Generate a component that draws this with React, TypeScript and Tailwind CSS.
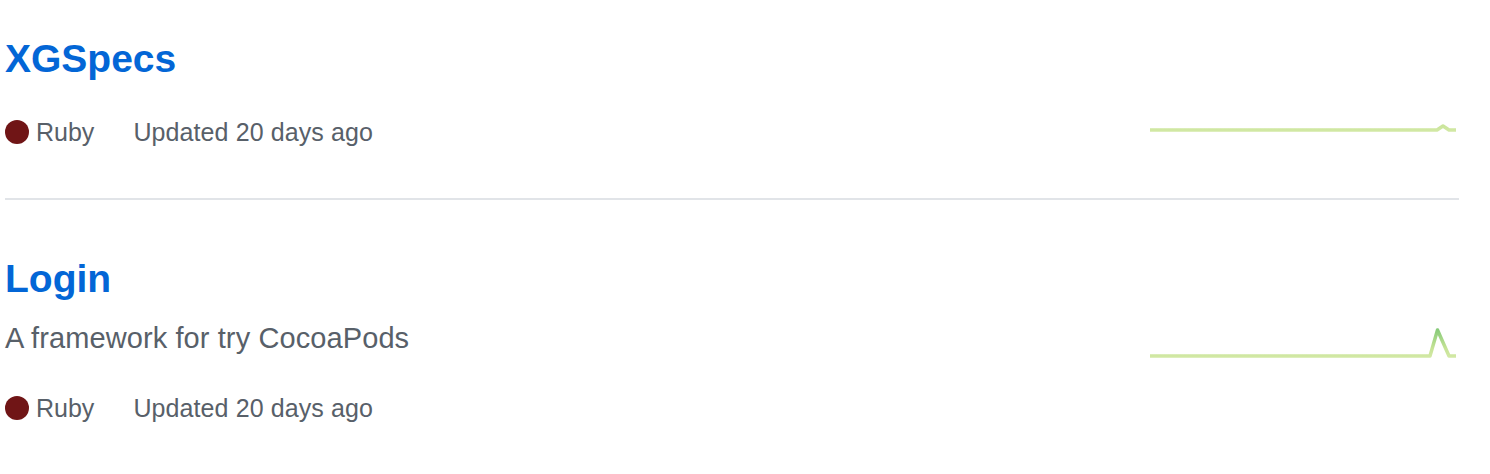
const font = { fontFamily: '"Liberation Sans", Arial, sans-serif' };

interface Repo {
  name: string;
  description?: string;
  language: string;
  updated: string;
  points: string;
}

const REPOS: Repo[] = [
  {
    name: "XGSpecs",
    language: "Ruby",
    updated: "Updated 20 days ago",
    points: "1,58 288,58 294,54 300,58 307,58",
  },
  {
    name: "Login",
    description: "A framework for try CocoaPods",
    language: "Ruby",
    updated: "Updated 20 days ago",
    points: "1,58 281,58 288.5,32 300,58 307,58",
  },
];

function Sparkline({ points, id }: { points: string; id: string }) {
  return (
    <svg width="310" height="60" viewBox="0 0 310 60" className="block">
      <defs>
        <linearGradient id={id} x1="0" y1="60" x2="0" y2="28" gradientUnits="userSpaceOnUse">
          <stop offset="0%" stopColor="#d3e9a6" />
          <stop offset="30%" stopColor="#c6e396" />
          <stop offset="100%" stopColor="#7cc674" />
        </linearGradient>
      </defs>
      <polyline
        points={points}
        fill="none"
        stroke={`url(#${id})`}
        strokeWidth="3.5"
        strokeLinejoin="round"
      />
    </svg>
  );
}

function Meta({ repo, className }: { repo: Repo; className: string }) {
  return (
    <div className={`flex items-center text-[25px] leading-[36px] text-[#586069] ${className}`}>
      <span className="w-6 h-6 rounded-full bg-[#701516] mr-[7px]" />
      <span className="mr-[39px]">{repo.language}</span>
      <span className="tracking-[0.1px]">{repo.updated}</span>
    </div>
  );
}

export default function App() {
  return (
    <div className="bg-white min-h-[474px]" style={font}>
      <ul className="ml-[5px] w-[1454px]">
        <li className="flex items-start pt-[35px] pb-[48px] border-b-2 border-[#e1e4e8]">
          <div className="flex-1">
            <h3 className="text-[39px] leading-[48px] font-bold text-[#0366d6]">{REPOS[0].name}</h3>
            <Meta repo={REPOS[0]} className="mt-[31px]" />
          </div>
          <div className="mt-[37px]">
            <Sparkline points={REPOS[0].points} id="sp0" />
          </div>
        </li>
        <li className="flex items-start pt-[55px]">
          <div className="flex-1">
            <h3 className="text-[39px] leading-[48px] font-bold text-[#0366d6]">{REPOS[1].name}</h3>
            <p className="mt-[14px] text-[29px] leading-[42px] text-[#586069] tracking-[0.1px]">
              {REPOS[1].description}
            </p>
            <Meta repo={REPOS[1]} className="mt-[31px]" />
          </div>
          <div className="mt-[43px]">
            <Sparkline points={REPOS[1].points} id="sp1" />
          </div>
        </li>
      </ul>
    </div>
  );
}
